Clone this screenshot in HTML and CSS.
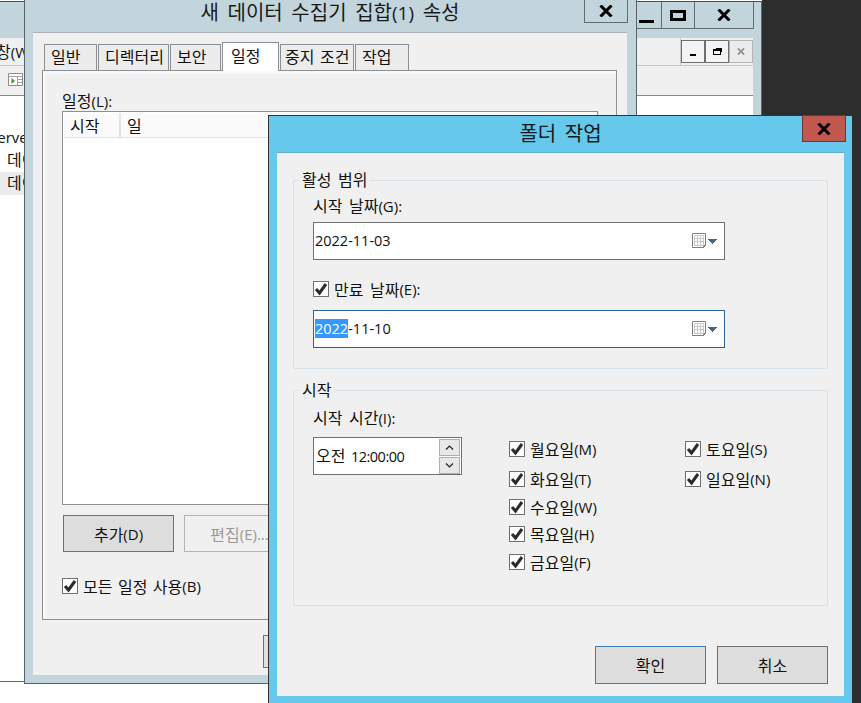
FILE: index.html
```html
<!DOCTYPE html>
<html lang="ko">
<head>
<meta charset="utf-8">
<title>폴더 작업</title>
<link rel="stylesheet" href="styles.css">
</head>
<body>
<svg class="defs" width="0" height="0" aria-hidden="true">
  <symbol id="check" viewBox="0 0 14 14"><path d="M2 7 L5.5 11 L12 2" fill="none" stroke="#2b2b2b" stroke-width="3"/></symbol>
  <symbol id="x" viewBox="0 0 14 12"><path d="M1.5 0.5 L12.5 11.5 M12.5 0.5 L1.5 11.5" fill="none" stroke="#000" stroke-width="3"/></symbol>
  <symbol id="cal" viewBox="0 0 15 16">
    <path d="M0.5 0.5H13.5V12.5L11.5 14.5H0.5Z M13.5 12.5H11.5V14.5" fill="#fff" stroke="#857f7c"/>
    <path d="M2.5 2.5H11.5V12.5H2.5Z M5.5 2.5V12.5 M8.5 2.5V12.5 M2.5 5.5H11.5 M2.5 8.5H11.5" fill="none" stroke="#c9c9c9"/>
  </symbol>
  <symbol id="drop" viewBox="0 0 9 5"><path d="M0 0H9V1H8V2H7V3H6V4H5V5H4V4H3V3H2V2H1V1H0Z" fill="#4a6690"/></symbol>
</svg>

<div class="desktop">
  <section class="win-main">
    <div class="main-title">
      <div class="caption-btns">
        <span class="cap cap-min"><i class="bar"></i></span>
        <span class="cap cap-max"><i class="square"></i></span>
        <span class="cap cap-close"><svg class="x-icon"><use href="#x"/></svg></span>
      </div>
    </div>
    <div class="menu-row">
      <span class="menu-text">창<span class="l">(W)</span></span>
      <div class="mdi-btns">
        <span class="mdi"><i class="mdi-min"></i></span>
        <span class="mdi"><i class="mdi-restore"></i></span>
        <span class="mdi mdi-off"><svg class="mdi-x"><use href="#x"/></svg></span>
      </div>
    </div>
    <div class="tool-row">
      <svg class="tool-icon" viewBox="0 0 15 13"><path d="M0.5 0.5H14.5V12.5H0.5Z" fill="#fff" stroke="#8b8b8b"/><path d="M0.5 3.5H14.5 M9.5 3.5V12.5 M10 6.5H14 M10 9.5H14" stroke="#a5a5a5" fill="none"/><path d="M3.5 5V11L7 8Z" fill="#3a9a3a"/></svg>
    </div>
    <div class="tree">
      <div class="tree-row tree-server"><span class="l">Server</span></div>
      <div class="tree-row">데이터</div>
      <div class="tree-row tree-on">데이터</div>
    </div>
  </section>

  <section class="win-props">
    <header class="props-title">
      <h1 class="props-heading">새 데이터 수집기 집합<span class="l-title">(1)</span> 속성</h1>
      <span class="cap cap-props"><svg class="x-icon"><use href="#x"/></svg></span>
    </header>
    <div class="props-client">
      <div class="tabs">
        <span class="tab">일반</span>
        <span class="tab">디렉터리</span>
        <span class="tab">보안</span>
        <span class="tab tab-on">일정</span>
        <span class="tab tab-mid">중지 조건</span>
        <span class="tab">작업</span>
      </div>
      <div class="page">
        <div class="field-label">일정<span class="l">(L):</span></div>
        <div class="list">
          <div class="list-head">
            <span class="col col-start">시작</span>
            <span class="col">일</span>
          </div>
        </div>
        <div class="list-btns">
          <span class="btn">추가<span class="l">(D)</span></span>
          <span class="btn btn-off">편집<span class="l">(E)...</span></span>
        </div>
        <label class="check check-all"><span class="box"><svg class="mark"><use href="#check"/></svg></span>모든 일정 사용<span class="l">(B)</span></label>
      </div>
      <div class="props-foot"><span class="btn btn-foot"></span></div>
    </div>
  </section>

  <section class="win-dialog">
    <header class="dlg-title">
      <h2 class="dlg-heading">폴더 작업</h2>
      <span class="cap-red"><svg class="x-icon"><use href="#x"/></svg></span>
    </header>
    <div class="dlg-client">
      <div class="group group-range">
        <span class="group-name">활성 범위</span>
        <div class="field-label">시작 날짜<span class="l">(G):</span></div>
        <div class="date">
          <span class="date-text">2022-11-03</span>
          <svg class="cal"><use href="#cal"/></svg><svg class="drop"><use href="#drop"/></svg>
        </div>
        <label class="check check-exp"><span class="box"><svg class="mark"><use href="#check"/></svg></span>만료 날짜<span class="l">(E):</span></label>
        <div class="date date-on">
          <span class="date-text"><span class="sel">2022</span>-11-10</span>
          <svg class="cal"><use href="#cal"/></svg><svg class="drop"><use href="#drop"/></svg>
        </div>
      </div>
      <div class="group group-start">
        <span class="group-name">시작</span>
        <div class="field-label">시작 시간<span class="l">(I):</span></div>
        <div class="start-row">
          <div class="time">
            <span class="time-text">오전 <span class="date-text clock">12:00:00</span></span>
            <div class="spin">
              <span class="spin-btn"><svg class="chev" viewBox="0 0 9 5"><path d="M1 4.5L4.5 1L8 4.5" fill="none" stroke="#222" stroke-width="1.2"/></svg></span>
              <span class="spin-btn"><svg class="chev" viewBox="0 0 9 5"><path d="M1 0.5L4.5 4L8 0.5" fill="none" stroke="#222" stroke-width="1.2"/></svg></span>
            </div>
          </div>
          <div class="days">
            <label class="check"><span class="box"><svg class="mark"><use href="#check"/></svg></span>월요일<span class="l">(M)</span></label>
            <label class="check"><span class="box"><svg class="mark"><use href="#check"/></svg></span>토요일<span class="l">(S)</span></label>
            <label class="check"><span class="box"><svg class="mark"><use href="#check"/></svg></span>화요일<span class="l">(T)</span></label>
            <label class="check"><span class="box"><svg class="mark"><use href="#check"/></svg></span>일요일<span class="l">(N)</span></label>
            <label class="check day-left"><span class="box"><svg class="mark"><use href="#check"/></svg></span>수요일<span class="l">(W)</span></label>
            <label class="check day-left"><span class="box"><svg class="mark"><use href="#check"/></svg></span>목요일<span class="l">(H)</span></label>
            <label class="check day-left"><span class="box"><svg class="mark"><use href="#check"/></svg></span>금요일<span class="l">(F)</span></label>
          </div>
        </div>
      </div>
      <div class="dlg-btns">
        <span class="btn btn-ok">확인</span>
        <span class="btn">취소</span>
      </div>
    </div>
  </section>
</div>
</body>
</html>
```

FILE: styles.css
```css
* { box-sizing: border-box; }
html, body { margin: 0; height: 100%; overflow: hidden; background: #fff; }
body { font: 16px/20px "Noto Sans CJK KR", "Noto Sans", sans-serif; color: #111; word-spacing: 2px; }
.defs { position: absolute; }
.l { font: 15px/20px "Open Sans", "Noto Sans", sans-serif; word-spacing: 0; }
.l-title { font: 19px/24px "Open Sans", sans-serif; }

.desktop { position: relative; width: 861px; height: 703px; overflow: hidden; background: linear-gradient(to right, #fff 762px, #2d2d2d 762px); }

/* back window */
.win-main { position: absolute; left: -20px; top: 1px; width: 782px; height: 681px; border: 1px solid #5e666a; border-top-color: #4a4f52; border-left: 0; background: #c3d5dc; display: flex; flex-direction: column; padding-right: 8px; }
.main-title { height: 36px; flex: none; position: relative; }
.caption-btns { position: absolute; top: 0; right: -1px; display: flex; height: 27px; border: 1px solid #636b70; border-top: 0; }
.cap { display: flex; align-items: center; justify-content: center; background: #c3d5dc; }
.cap-min { width: 30px; border-right: 1px solid #636b70; }
.cap-max { width: 33px; border-right: 1px solid #636b70; }
.cap-close { width: 58px; }
.bar { display: block; width: 15px; height: 3px; background: #000; margin-top: 12px; }
.square { display: block; width: 16px; height: 11px; border: 3px solid #000; }
.x-icon { width: 14px; height: 12px; display: block; }
.menu-row { height: 28px; flex: none; background: #f0f0f0; border-bottom: 1px solid #c4c8cb; display: flex; justify-content: space-between; padding-left: 16px; align-items: center; }
.menu-text { white-space: nowrap; }
.mdi-btns { display: flex; height: 27px; padding: 2px 0 0 0; border-left: 1px solid #c4c8cb; align-self: flex-start; }
.mdi { width: 24px; height: 23px; border: 1px solid #6f6f6f; background: #f4f4f4; display: flex; align-items: center; justify-content: center; }
.mdi-off { border-color: #b5b5b5; background: #ececec; }
.mdi-min { width: 6px; height: 2px; background: #000; margin-top: 6px; }
.mdi-restore { width: 8px; height: 6px; border: 1px solid #000; border-top-width: 2px; box-shadow: 2px -2px 0 -1px #000; }
.mdi-x { width: 8px; height: 7px; opacity: .38; }
.tool-row { height: 30px; flex: none; background: #f0f0f0; border-bottom: 1px solid #85898d; padding: 7px 0 0 28px; }
.tool-icon { display: block; width: 15px; height: 13px; }
.tree { flex: 1; background: #fff; padding-top: 30px; }
.tree-row { height: 23px; padding-left: 27px; white-space: nowrap; line-height: 20px; }
.tree-server { padding-left: 0; margin-left: 9px; }
.tree-on { background: #ececec; }

/* properties window */
.win-props { position: absolute; left: 24px; top: -10px; width: 613px; height: 694px; border: 1px solid #5a6368; background: #c3d5dc; padding: 0 9px 8px 8px; display: flex; flex-direction: column; }
.props-title { height: 41px; flex: none; position: relative; display: flex; justify-content: center; padding-top: 9px; }
.props-heading { margin: 0; font-size: 20px; font-weight: 400; line-height: 24px; word-spacing: 3px; color: #1a1a1a; }
.cap-props { position: absolute; top: 0; right: -1px; width: 44px; height: 32px; border: 1px solid #636b70; }
.cap-props .x-icon { margin-top: 8px; }
.props-client { flex: 1; background: #f0f0f0; border-top: 1px solid #a9b3b9; padding: 9px 9px 0; display: flex; flex-direction: column; }
.tabs { display: grid; grid-template-columns: 53px 71px 51px 57px 74px 54px; column-gap: 1px; height: 28px; padding-left: 2px; align-items: end; position: relative; z-index: 1; }
.tab { height: 26px; padding: 0 0 0 6px; border: 1px solid #8c9094; border-bottom: 0; background: #ececec; white-space: nowrap; line-height: 23px; }
.tab-on { height: 29px; padding-left: 8px; margin-bottom: -1px; line-height: 24px; background: #fff; }
.tab-mid { padding-left: 4px; word-spacing: 1px; }
.page { height: 550px; flex: none; width: 575px; border: 1px solid #8c9094; box-shadow: inset 3px 3px 0 #f8f8f8; padding: 19px 19px 0; background: #f0f0f0; }
.field-label { height: 20px; white-space: nowrap; }
.page > .field-label { margin-bottom: 1px; }
.list { height: 394px; background: #fff; border: 1px solid #8c9094; padding: 1px; margin-right: -1px; }
.list-head { height: 25px; display: flex; background: #fbfbfb; border-bottom: 1px solid #e2e2e2; }
.col { padding-left: 6px; line-height: 24px; }
.col-start { width: 57px; border-right: 2px solid #e2e2e2; }
.list-btns { display: flex; gap: 10px; margin: 10px 0 0 1px; }
.btn { width: 111px; height: 38px; border: 1px solid #707070; background: #ddd; display: flex; align-items: center; justify-content: center; white-space: pre; }
.list-btns .btn { height: 37px; }
.btn-off { background: #f0f0f0; border-color: #b4b4b4; color: #999; }
.btn-off .l { color: #999; }
.check { display: flex; align-items: center; height: 20px; white-space: pre; }
.box { width: 16px; height: 16px; border: 1px solid #707070; background: #fff; flex: none; margin-right: 5px; display: flex; align-items: center; justify-content: center; }
.mark { width: 14px; height: 14px; display: block; }
.check-all { margin-top: 24px; word-spacing: 1px; }
.props-foot { padding: 15px 0 0 221px; }
.btn-foot { height: 33px; width: 100px; background: #e1e1e1; }

/* front dialog */
.win-dialog { position: absolute; left: 268px; top: 115px; width: 584px; height: 588px; border-left: 1px solid #333; border-top: 1px solid #333; background: #66c8ea; padding: 0 8px 7px 8px; display: flex; flex-direction: column; }
.dlg-title { height: 36px; flex: none; position: relative; display: flex; justify-content: center; padding-top: 5px; }
.dlg-heading { margin: 0; font-size: 20px; font-weight: 400; line-height: 24px; color: #101a20; word-spacing: 3px; }
.cap-red { position: absolute; top: -1px; right: -2px; width: 44px; height: 27px; background: #c1574f; border: 1px solid #6e3531; display: flex; align-items: center; justify-content: center; }
.dlg-client { flex: 1; background: #f0f0f0; padding: 27px 16px 0; border-top: 1px solid #5eb0cc; }
.group { position: relative; border: 1px solid #d6e0e8; border-radius: 2px; padding-left: 19px; }
.group-range { height: 189px; padding-top: 14px; }
.group-start { height: 216px; margin-top: 21px; padding-top: 16px; }
.group-name { position: absolute; left: 5px; top: -12px; padding: 0 3px; background: #f0f0f0; }
.group .field-label { margin-bottom: 7px; }
.date { width: 412px; height: 38px; border: 1px solid #707070; background: #fff; display: flex; align-items: center; padding: 0 7px 0 1px; }
.date-on { border-color: #2a6496; margin-top: 11px; }
.date-text { font: 14.5px/20px "Open Sans", sans-serif; word-spacing: 0; }
.clock { letter-spacing: -0.5px; }
.sel { background: #3399ff; color: #fff; }
.cal { width: 15px; height: 16px; margin-left: auto; display: block; }
.drop { width: 9px; height: 5px; margin-left: 1px; display: block; }
.check-exp { margin-top: 19px; }
.start-row { display: flex; margin-top: 10px; }
.group-start .field-label { margin-bottom: 0; }
.time { flex: none; width: 149px; height: 38px; border: 1px solid #707070; background: #fff; display: flex; align-items: center; justify-content: space-between; padding: 0 1px 0 2px; }
.time-text { white-space: pre; word-spacing: 1px; }
.spin { display: flex; flex-direction: column; gap: 1px; }
.spin-btn { width: 21px; height: 17px; border: 1px solid #adadad; background: #e8e8e8; display: flex; align-items: center; justify-content: center; }
.chev { width: 9px; height: 5px; display: block; }
.days { display: grid; grid-template-columns: 176px auto; grid-template-rows: 30px 28px 27px 28px 20px; margin: 2px 0 0 47px; }
.day-left { grid-column: 1; }
.dlg-btns { display: flex; justify-content: flex-end; gap: 11px; margin-top: 40px; }
.btn-ok { border-color: #3b80b0; }
```
